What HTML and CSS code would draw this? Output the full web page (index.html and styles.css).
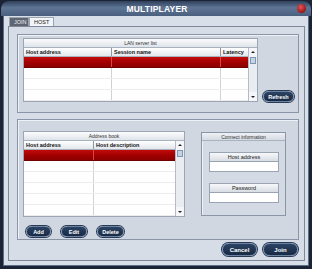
FILE: index.html
```html
<!DOCTYPE html>
<html lang="en">
<head>
  <meta charset="UTF-8">
  <title>Multiplayer</title>
  <link rel="stylesheet" href="styles.css">
</head>
<body>
  <div class="window">
    <div class="titlebar">
      <span class="title">MULTIPLAYER</span>
      <span class="close"></span>
    </div>
    <div class="body">
      <div class="tabs">
        <div class="tab active">JOIN</div>
        <div class="tab">HOST</div>
      </div>
      <div class="content">

        <div class="panel lan">
          <div class="list lan-list">
            <div class="caption">LAN server list</div>
            <div class="list-body">
              <div class="rows">
                <div class="row head"><span>Host address</span><span>Session name</span><span>Latency</span></div>
                <div class="row sel"><span></span><span></span><span></span></div>
                <div class="row"><span></span><span></span><span></span></div>
                <div class="row"><span></span><span></span><span></span></div>
                <div class="row"><span></span><span></span><span></span></div>
              </div>
              <div class="scroll">
                <div class="arrow up"></div>
                <div class="thumb"></div>
                <div class="track"></div>
                <div class="arrow down"></div>
              </div>
            </div>
          </div>
          <button class="btn refresh">Refresh</button>
        </div>

        <div class="panel book">
          <div class="book-top">
            <div class="list book-list">
              <div class="caption">Address book</div>
              <div class="list-body">
                <div class="rows">
                  <div class="row head"><span>Host address</span><span>Host description</span></div>
                  <div class="row sel"><span></span><span></span></div>
                  <div class="row"><span></span><span></span></div>
                  <div class="row"><span></span><span></span></div>
                  <div class="row"><span></span><span></span></div>
                  <div class="row"><span></span><span></span></div>
                  <div class="row"><span></span><span></span></div>
                </div>
                <div class="scroll">
                  <div class="arrow up"></div>
                  <div class="thumb"></div>
                  <div class="track"></div>
                  <div class="arrow down"></div>
                </div>
              </div>
            </div>
            <div class="connect">
              <div class="caption">Connect information</div>
              <div class="field first">
                <div class="label">Host address</div>
                <div class="input"></div>
              </div>
              <div class="field">
                <div class="label">Password</div>
                <div class="input"></div>
              </div>
            </div>
          </div>
          <div class="book-btns">
            <button class="btn small add">Add</button>
            <button class="btn small edit">Edit</button>
            <button class="btn small delete">Delete</button>
          </div>
        </div>

        <div class="footer">
          <button class="btn big">Cancel</button>
          <button class="btn big">Join</button>
        </div>

      </div>
    </div>
  </div>
</body>
</html>
```

FILE: styles.css
```css
* { box-sizing: border-box; }
html, body { margin: 0; padding: 0; }
body { width: 312px; height: 269px; overflow: hidden; background: #1b2434; font-family: "Liberation Sans", Arial, sans-serif; }

.window { width: 312px; height: 269px; background: #1b2434; border-radius: 9px 9px 0 0; padding: 0 3px 3px; display: flex; flex-direction: column; }
.titlebar { height: 16px; margin: 0 -3px; border-radius: 9px 9px 0 0; background: linear-gradient(#2f405a, #5e7595 45%, #4a5f7e); border: 1px solid #1b2434; border-bottom: none; display: flex; align-items: center; justify-content: center; position: relative; }
.title { color: #fff; font-weight: bold; font-size: 8.5px; letter-spacing: 0.2px; margin-left: 2px; }
.close { position: absolute; right: 5px; top: 3px; width: 9px; height: 9px; border-radius: 50%; background: radial-gradient(circle at 40% 35%, #e0585a, #9c1416 70%); }

.body { flex: 1; background: #d8dfe9; border-left: 1px solid #5d6f88; border-right: 1px solid #5d6f88; border-bottom: 1px solid #5d6f88; padding: 1px 0 0 4px; display: flex; flex-direction: column; }
.tabs { display: flex; height: 9px; padding-left: 1px; }
.tab { font-size: 5.5px; line-height: 9px; padding: 0 4px; color: #222; background: #f2f4f7; border: 1px solid #9aa4b2; border-bottom: none; }
.tab.active { background: #5f6672; color: #e8ecf2; width: 20px; }

.content { width: 297px; height: 235px; border: 1px solid #7d899b; background: #d6dde7; padding: 7px 0 0 8px; display: flex; flex-direction: column; }

.panel { width: 282px; border: 1px solid #8a95a7; background: #d0d7e1; box-shadow: inset 1px 1px 0 #eef1f6; }
.lan { height: 79px; padding: 3px 0 0 5px; display: flex; align-items: flex-start; }
.refresh { margin: 53px 0 0 5px; width: 31px; }

.list { background: #fff; border: 1px solid #9ba5b4; }
.lan-list { width: 235px; }
.book-list { width: 162px; }
.caption { height: 9px; font-size: 5px; line-height: 9px; text-align: center; color: #333; background: linear-gradient(#fbfcfd, #dfe4ea); border-bottom: 1px solid #a9b2bf; }
.list-body { display: flex; }
.rows { flex: 1; }
.row { display: grid; height: 11px; border-bottom: 1px solid #ececec; }
.row span { border-right: 1px solid #cfd3d8; }
.row span:last-child { border-right: none; }
.lan-list .row { grid-template-columns: 88px 109px 1fr; }
.book-list .row { grid-template-columns: 70px 1fr; }
.row.head { height: 9px; background: linear-gradient(#ffffff, #e3e7ec); border-bottom: 1px solid #a8b0bc; font-size: 5.5px; font-weight: bold; line-height: 8px; color: #111; }
.row.head span { padding-left: 2px; border-right: 1px solid #8d96a3; }
.row.head span:last-child { border-right: none; }
.row.sel { background: linear-gradient(#c40a0a, #a00000 55%, #8c0000); border-bottom: 1px solid #6e0000; }
.row.sel span { border-right-color: #d44; }

.scroll { width: 9px; background: #e9edf2; border-left: 1px solid #b3bcc8; display: flex; flex-direction: column; }
.arrow { height: 9px; position: relative; background: #f4f6f9; }
.arrow::after { content: ""; position: absolute; left: 2px; border-left: 2px solid transparent; border-right: 2px solid transparent; }
.arrow.up::after { top: 3px; border-bottom: 2px solid #222; }
.arrow.down::after { top: 4px; border-top: 2px solid #222; }
.thumb { height: 7px; margin: 0 1px; background: #c4d3e6; border: 1px solid #7f95b2; }
.track { flex: 1; }

.book { height: 121px; margin-top: 6px; padding: 11px 0 0 5px; display: flex; flex-direction: column; }
.book-top { display: flex; align-items: flex-start; }
.connect { width: 85px; height: 84px; margin-left: 16px; margin-top: 1px; border: 1px solid #8a95a7; background: #d3dae4; box-shadow: inset 1px 1px 0 #eef1f6; }
.connect .caption { height: 8px; line-height: 8px; background: linear-gradient(#eef1f5, #d5dbe3); }
.field { margin: 11px 0 0 7px; width: 70px; }
.field.first { margin-top: 11px; }
.label { height: 9px; font-size: 5.5px; line-height: 9px; text-align: center; color: #222; background: linear-gradient(#f7f8fa, #d8dde4); border: 1px solid #9aa4b2; border-bottom: none; }
.input { height: 11px; background: #fff; border: 1px solid #9aa4b2; }

.book-btns { display: flex; gap: 10px; margin: 9px 0 0 3px; }

.btn { height: 11px; padding: 0; border: 1px solid #6c82a3; border-radius: 6px; background: linear-gradient(#2c4364, #182a44); color: #fff; font-family: "Liberation Sans", Arial, sans-serif; font-weight: bold; font-size: 5.5px; box-shadow: 0 0 0 1px #2a3b55; }
.small.add { width: 25px; }
.small.edit { width: 26px; }
.small.delete { width: 27px; }
.footer { display: flex; justify-content: flex-end; gap: 6px; margin: 3px 6px 0 0; }
.btn.big { width: 35px; height: 13px; border-radius: 7px; font-size: 6px; }
```
